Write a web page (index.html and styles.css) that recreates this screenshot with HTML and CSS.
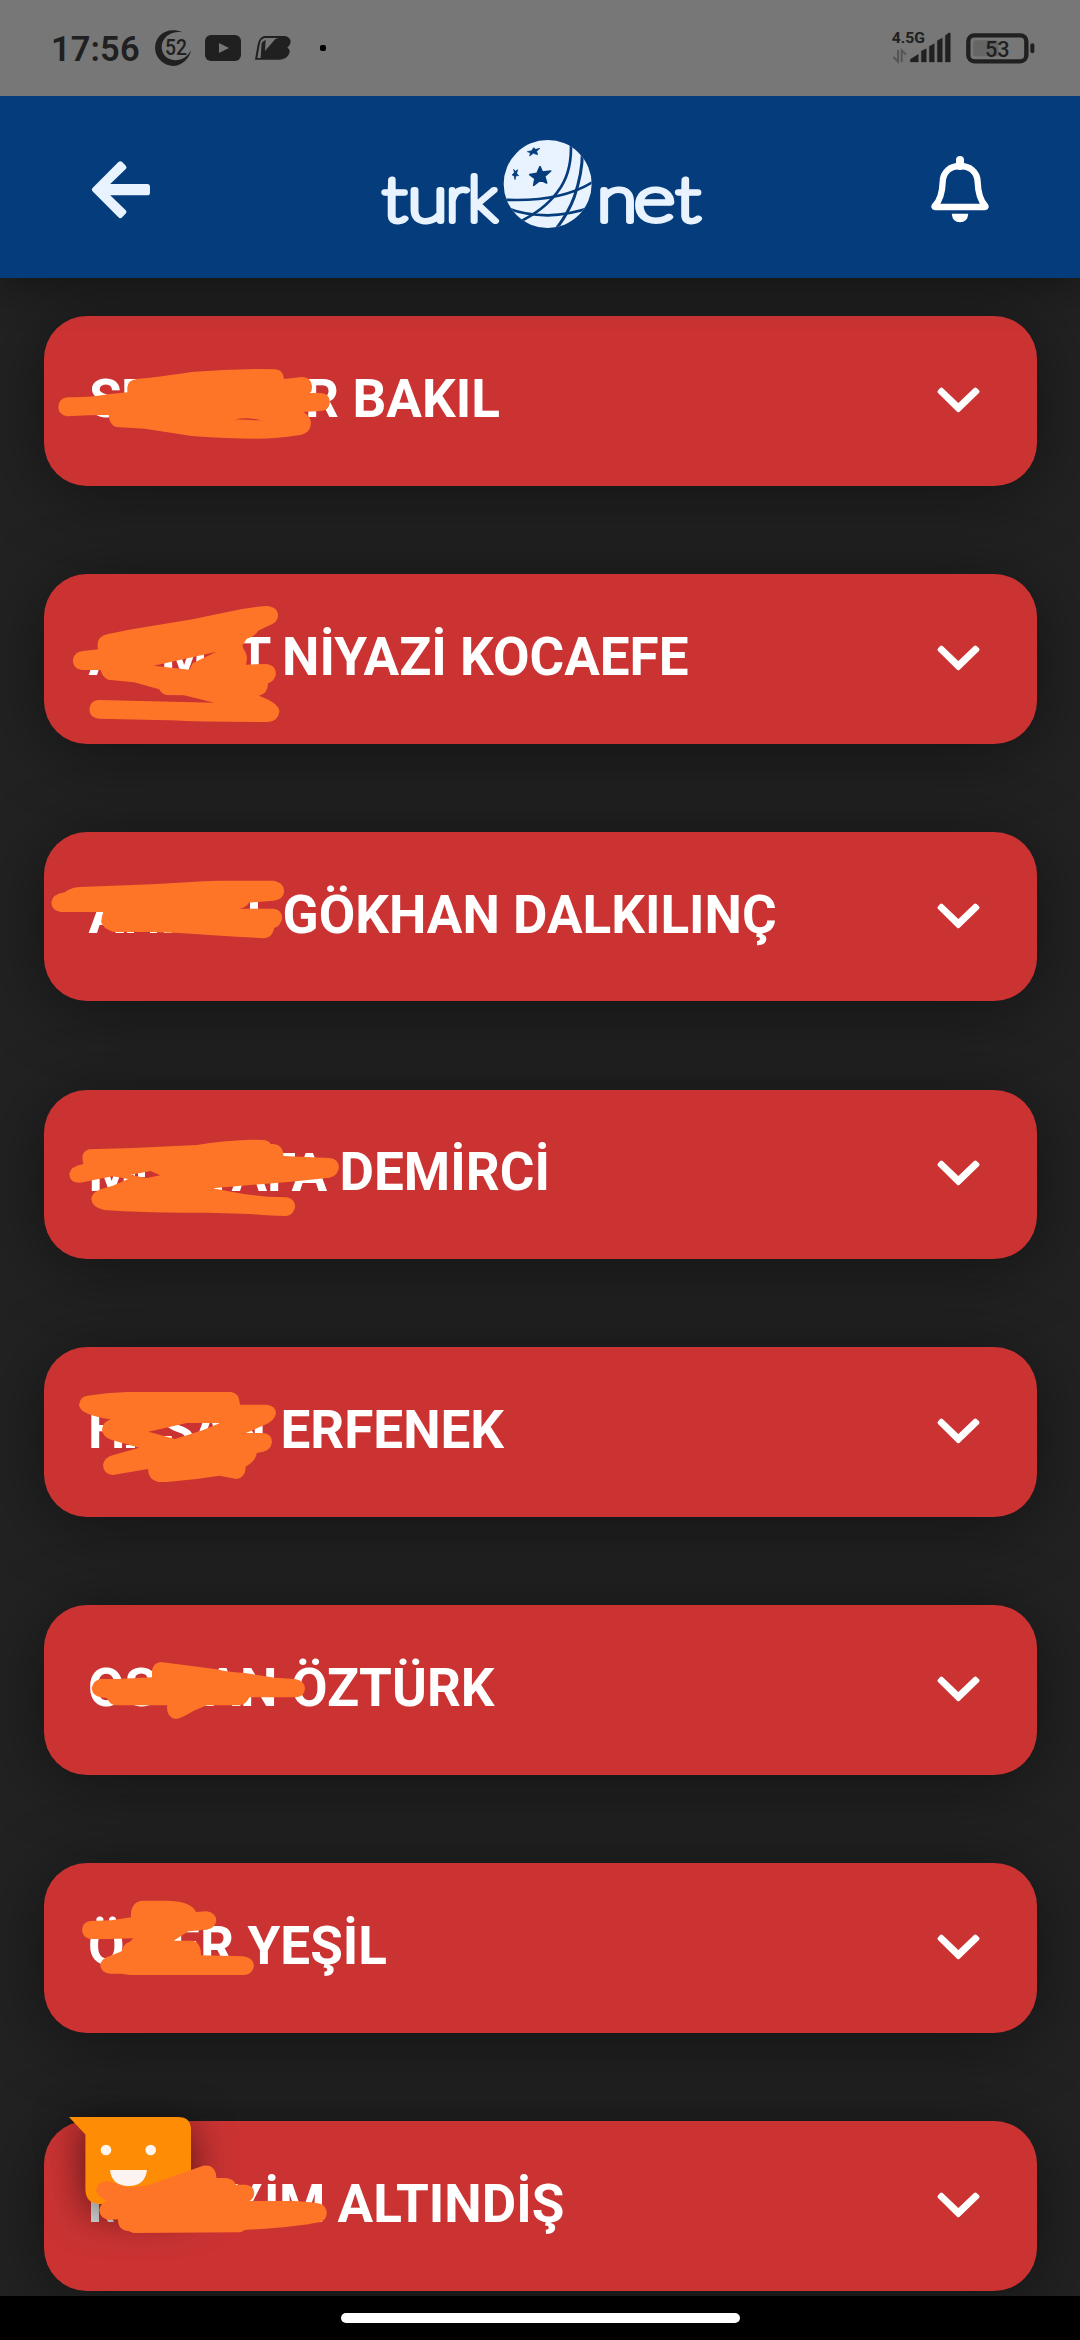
FILE: index.html
```html
<!DOCTYPE html>
<html lang="tr">
<head>
<meta charset="utf-8">
<title>turk.net</title>
<link rel="stylesheet" href="styles.css">
</head>
<body>
<div class="screen">
  <div class="status">
    <span class="clock">17:56</span>
    <svg class="st-52" viewBox="465 90 108 108"><path fill="#202020" fill-rule="evenodd" d="M547 97C500 78 465 108 465 145C467 178 495 198 520 198C550 196 570 172 573 150C562 173 540 183 520 180C495 176 484 158 485 138C488 110 515 92 547 97Z"/><text x="495" y="165" font-size="68" font-weight="500" textLength="66" lengthAdjust="spacingAndGlyphs">52</text></svg>
    <svg class="st-yt" viewBox="0 0 36 26"><rect width="36" height="26" rx="6" fill="#202020"/><path d="M14 8L24 13L14 18Z" fill="#777"/></svg>
    <svg class="st-vb" viewBox="765 108 108 72"><path fill="#202020" fill-rule="evenodd" d="M794 108H855Q872 112 872 126Q870 138 862 143Q874 150 866 164Q858 178 838 179H765L773 133Q778 110 794 108ZM795 114Q781 116 779 134L772 174H782L785 128L797 119L795 153L826 117L836 114Z"/></svg>
    <span class="dot"></span>
    <span class="spacer"></span>
    <svg class="st-signal" viewBox="275 90 180 100"><text x="277" y="129" font-size="46" font-weight="700" textLength="100" lengthAdjust="spacingAndGlyphs">4.5G</text><path d="M296 150V185L282 171M307 186V151L320 164" fill="none" stroke="#555" stroke-width="6"/><path fill="#202020" d="M333 186V178L357 163V186ZM366 186V153L381 146V186ZM390 186V139L405 131V186ZM414 186V122L429 114V186ZM438 186V107L448 99H453V186Z" stroke="#202020" stroke-width="1" stroke-linejoin="round"/></svg>
    <svg class="st-batt" viewBox="500 98 206 92"><rect x="507" y="105" width="174" height="78" rx="18" fill="none" stroke="#202020" stroke-width="13"/><rect x="522" y="120" width="76" height="48" rx="8" fill="#666"/><rect x="693" y="129" width="12" height="30" rx="6" fill="#202020"/><text x="557" y="170" font-size="68" font-weight="500" textLength="74" lengthAdjust="spacingAndGlyphs">53</text></svg>
  </div>

  <header class="bar">
    <svg class="back" viewBox="276 484 175 172"><path d="M284 570L361 493L371 503L311 561H442V579H311L371 637L361 647Z" fill="#e8f3ff" stroke="#e8f3ff" stroke-width="16" stroke-linejoin="round"/></svg>
    <svg class="logo" viewBox="0 0 324 92">
      <g class="word">
        <text transform="translate(14.500 82.500) scale(1.2 1)">t</text>
        <text transform="translate(47.500 82.500) scale(1.2 1)">u</text>
        <text transform="translate(77 82.500) scale(1.05 1)">r</text>
        <text transform="translate(102.500 82.500) scale(1.07 1)">k</text>
        <text transform="translate(237 82.500) scale(1.2 1)">n</text>
        <text transform="translate(274.500 82.500) scale(1.3 1)">e</text>
        <text transform="translate(308 82.500) scale(1.2 1)">t</text>
      </g>
      <g transform="translate(-19 -38) scale(.33333)">
        <clipPath id="globe"><circle cx="560" cy="252" r="132"/></clipPath>
        <circle cx="560" cy="252" r="132" fill="#e8f3ff"/>
        <g clip-path="url(#globe)" fill="none" stroke="#043c7c" stroke-width="8">
          <path d="M629 120Q636 215 590 275Q550 330 470 368"/>
          <path d="M664 160Q664 220 640 290Q622 340 580 394" stroke-width="9"/>
          <path d="M425 299Q600 308 700 243"/>
          <path d="M425 318Q480 345 560 346Q625 345 690 322"/>
        </g>
        <g fill="#043c7c" stroke="#043c7c" stroke-width="5" stroke-linejoin="round">
          <path d="M537 200L544 216L569 213L551 229L557 249L538 240L518 256L522 236L506 224L528 220Z"/>
          <path d="M518 143L524 148L537 145L527 154L530 164L517 160L506 168L508 158L499 155L512 152Z" stroke-width="2"/>
          <path d="M458 208L463 214L470 209L467 220L473 227L465 227L462 239L459 227L453 225L460 218Z" stroke-width="2"/>
        </g>
      </g>
    </svg>
    <svg class="bell" viewBox="393 470 174 199"><path d="M480 482V500" stroke="#fff" stroke-width="24" stroke-linecap="round"/><path d="M404 620C422 602 427 580 428 548C429 515 453 500 480 500C507 500 532 515 533 548C534 580 540 602 556 620Q558 623 555 623H405Q402 623 404 620Z" fill="none" stroke="#fff" stroke-width="19" stroke-linejoin="round"/><path d="M455 643H505Q502 669 480 669Q458 669 455 643Z" fill="#fff"/></svg>
  </header>

  <main class="list">
    <div class="card"><svg class="given"><text y="101"><tspan x="45">S</tspan><tspan x="77">E</tspan><tspan x="261">R</tspan></text></svg><span class="name n1">BAKIL</span><svg class="chev" viewBox="261 261 129 78"><path d="M274 268L325 317L376 268L383 275L325 331L268 275Z"/></svg></div>
    <div class="card"><svg class="given"><text y="101"><tspan x="44.5">A</tspan><tspan x="117">M</tspan><tspan x="194.5">T</tspan></text></svg><span class="name n2">NİYAZİ KOCAEFE</span><svg class="chev" viewBox="261 261 129 78"><path d="M274 268L325 317L376 268L383 275L325 331L268 275Z"/></svg></div>
    <div class="card"><svg class="given"><text y="101"><tspan x="44.5">A</tspan></text><path d="M83 98H90V101H83ZM106 98H113V101H106ZM120 98H128V101H120ZM206 68H214V80H206Z"/></svg><span class="name n3">GÖKHAN DALKILINÇ</span><svg class="chev" viewBox="261 261 129 78"><path d="M274 268L325 317L376 268L383 275L325 331L268 275Z"/></svg></div>
    <div class="card"><svg class="given"><text y="101"><tspan x="44.5">M</tspan><tspan x="187.500">AFA</tspan></text><path d="M170 94H178V101H170ZM86 84L91 86V82ZM94 80H101V87H94Z"/></svg><span class="name n4">DEMİRCİ</span><svg class="chev" viewBox="261 261 129 78"><path d="M274 268L325 317L376 268L383 275L325 331L268 275Z"/></svg></div>
    <div class="card"><svg class="given"><text y="101"><tspan x="44">H</tspan><tspan x="118">S</tspan><tspan x="149">A</tspan><tspan x="184.500">N</tspan></text><path d="M82 98H91V101H82Z"/></svg><span class="name n5">ERFENEK</span><svg class="chev" viewBox="261 261 129 78"><path d="M274 268L325 317L376 268L383 275L325 331L268 275Z"/></svg></div>
    <div class="card"><svg class="given"><text y="101"><tspan x="44">O</tspan><tspan x="80.500">S</tspan><tspan x="161">A</tspan><tspan x="196">N</tspan></text></svg><span class="name n6">ÖZTÜRK</span><svg class="chev" viewBox="261 261 129 78"><path d="M274 268L325 317L376 268L383 275L325 331L268 275Z"/></svg></div>
    <div class="card"><svg class="given"><text y="101"><tspan x="44">Ö</tspan><tspan x="126">E</tspan><tspan x="156">R</tspan></text></svg><span class="name n7">YEŞİL</span><svg class="chev" viewBox="261 261 129 78"><path d="M274 268L325 317L376 268L383 275L325 331L268 275Z"/></svg></div>
    <div class="card"><svg class="given"><text y="101"><tspan x="185">Y</tspan><tspan x="220">İ</tspan><tspan x="235">M</tspan></text><path fill="#ddd" d="M47 64H55V101H47ZM62 96H67L70 101H64Z"/></svg><span class="name n8">ALTINDİŞ</span><svg class="chev" viewBox="261 261 129 78"><path d="M274 268L325 317L376 268L383 275L325 331L268 275Z"/></svg></div>
  </main>

  <nav class="home"><span class="pill"></span></nav>

  <svg class="bot" viewBox="0 0 122 87"><path d="M0 0H109Q122 0 122 13V75Q122 87 110 87H30Q16.400 86 16.400 72V17.500Z" fill="#ff8c05"/><circle cx="37" cy="33" r="5.300" fill="#fff5ee"/><circle cx="81.700" cy="33" r="5.300" fill="#fff5ee"/><path d="M41 53H78Q76 69 59.500 69Q43 69 41 53Z" fill="#fdf4f2"/></svg>

  <svg class="ink" viewBox="0 0 1080 2340">
    <path transform="translate(30 300) scale(.33333)" d="M112 292Q160 292 192 289Q240 281 292 277V262Q294 240 320 237L345 235Q430 225 485 216Q580 208 680 207L735 208Q760 210 762 237L815 231Q843 231 846 258Q847 272 840 279H872Q899 280 900 307Q897 332 872 333L820 336Q843 348 843 371Q840 397 815 404Q740 416 680 416Q600 416 485 408L345 386L260 381Q238 376 236 345Q200 344 175 346L112 349Q86 345 85 321Q86 296 112 292ZM615 358Q650 350 695 361Q650 360 615 358Z"/>
    <path transform="translate(30 560) scale(.43367 .33333)" d="M157 268Q150 230 180 222L235 208L375 178L455 156Q500 142 545 138Q572 140 572 168Q571 188 550 197L526 212Q517 232 500 236L490 256L492 266Q501 280 500 300L498 314Q515 312 545 312Q567 315 567 342Q565 362 549 370Q548 402 528 407Q575 430 575 455Q572 484 548 486Q400 486 320 481L158 476Q137 472 137 448Q138 422 158 420L425 428L355 406L315 405Q303 402 298 388L240 367L180 359Q166 350 163 330H120Q99 326 99 302Q100 276 122 273ZM285 317L400 284L430 275L375 310L368 329Z"/>
    <path transform="translate(30 830) scale(.49745 .33333)" d="M70 187Q80 173 100 171L245 163Q320 155 380 152H490Q511 158 511 183Q510 208 490 212L440 218Q435 232 420 236H490Q507 240 507 266Q503 288 491 294Q487 323 472 325L415 320L300 309L245 306H168Q146 295 143 275L147 246H62Q43 242 43 217Q45 192 70 187Z"/>
    <path transform="translate(30 1080) scale(.34439 .33333)" d="M155 252Q145 215 172 208L300 204L485 195Q560 182 640 179L680 180Q695 183 699 192Q735 190 736 228L870 234Q897 238 897 263Q893 288 870 293L750 306L640 315L530 325L620 342L690 350L745 352Q770 358 770 380Q765 405 745 408Q700 407 640 402L515 398Q350 400 215 390Q180 382 178 357Q180 335 210 326L240 317L285 297L240 289L145 308Q115 308 114 282Q118 258 155 252ZM290 285L350 273L378 286L340 294Z"/>
    <path transform="translate(30 1340) scale(.33333)" d="M172 167Q230 158 290 156H602Q628 158 630 194H710Q738 198 738 220Q735 240 710 252L648 279H690Q726 278 726 306Q723 330 700 335L680 339Q680 360 647 380Q647 412 620 417L568 407Q490 420 410 426H385Q355 420 354 387L248 405Q220 402 219 376Q222 352 250 345L328 323L245 300Q218 292 216 268Q220 245 242 238Q150 225 147 195Q150 170 172 167ZM355 275L470 249H570L520 270L435 297Z"/>
    <path transform="translate(30 1600) scale(.33333)" d="M213 237Q270 238 305 235L366 232V210Q372 188 392 186L560 208Q600 218 645 219L735 233L795 237Q824 242 825 265Q824 290 798 292H658Q650 312 630 316H530L490 333Q450 357 437 357Q410 352 411 320L413 316H255Q236 310 231 294L213 292Q187 288 185 264Q190 240 213 237Z"/>
    <path transform="translate(30 1850) scale(.33333)" d="M180 213L245 211L303 202Q300 158 335 152H415Q485 155 498 186L530 184Q557 188 559 211Q556 235 530 239L475 244L431 272H490Q514 278 513 316L640 319Q671 325 672 347Q668 372 645 375H300L275 371H240Q212 368 211 345Q213 325 240 318L275 304Q280 280 300 275L310 265L240 267H180Q157 262 156 239Q158 217 180 213Z"/>
    <path transform="translate(30 2090) scale(.35714 .33333)" d="M215 273Q245 280 275 293L330 286L485 227Q520 222 522 264H550Q572 268 576 284H605Q628 288 628 310Q627 325 615 333L740 333Q815 338 820 345Q831 355 831 370Q829 393 810 397Q740 412 600 420Q594 427 585 427L290 429L275 423Q247 422 246 388L222 390Q195 385 194 360Q197 338 218 332Q187 322 185 300Q190 275 215 273Z"/>
  </svg>
</div>
</body>
</html>
```
FILE: styles.css
```css
* { box-sizing: border-box; }
body { margin: 0; background: #222; font-family: Roboto, sans-serif; }
svg { display: block; flex: none; overflow: visible; }
.screen {
  position: relative;
  width: 1080px;
  height: 2340px;
  overflow: hidden;
  display: flex;
  flex-direction: column;
}
.status {
  position: relative;
  z-index: 2;
  height: 96px;
  flex: none;
  background: #777;
  display: flex;
  align-items: center;
  padding: 0 45px 0 51px;
  color: #202020;
}
.status text { fill: #202020; font-family: Roboto, sans-serif; }
.clock { width: 104px; font-size: 34.5px; font-weight: 600; letter-spacing: 0.100px; white-space: nowrap; padding-top: 2px; }
.st-52 { width: 36px; height: 36px; }
.st-yt { width: 36px; height: 26px; margin-left: 14px; }
.st-vb { width: 36px; height: 24px; margin-left: 14px; }
.dot { width: 6px; height: 6px; border-radius: 2px; background: #000; margin-left: 29px; }
.spacer { flex: 1; }
.st-signal { width: 60px; height: 33.300px; margin-top: -3px; }
.st-batt { width: 68.700px; height: 30.700px; margin-left: 15px; }

.bar {
  position: relative;
  z-index: 1;
  height: 182px;
  flex: none;
  background: #043c7c;
  box-shadow: 0 4px 40px rgba(0, 0, 0, .45);
  display: flex;
  align-items: center;
  justify-content: space-between;
  padding: 4px 91px 0 92px;
}
.back { width: 58.300px; height: 57.300px; margin-top: 2px; }
.logo { width: 324px; height: 92px; margin-left: 3px; margin-top: -10px; }
.word { fill: #e8f3ff; stroke: #e8f3ff; stroke-width: 5.800px; stroke-linejoin: round; text-anchor: middle; font-family: Lato, sans-serif; font-weight: 100; font-size: 61px; }
.bell { width: 58px; height: 66.300px; }

.list {
  flex: 1;
  min-height: 0;
  overflow: hidden;
  display: flex;
  flex-direction: column;
  gap: 88.060px;
  padding: 38px 43px 0 44px;
}
.card {
  position: relative;
  flex: none;
  height: 169.800px;
  border-radius: 43px;
  background: #cb3333;
  box-shadow: 0 8px 70px rgba(0, 0, 0, .45);
  display: flex;
  align-items: center;
  justify-content: space-between;
  padding: 0 57px 0 0;
}
.given { position: absolute; inset: 0; width: 100%; height: 100%; fill: #fff; font-size: 53px; font-weight: 700; }
.name { color: #fff; font-size: 53px; line-height: 64px; font-weight: 700; white-space: nowrap; padding-bottom: 4px; }
.n1 { margin-left: 308.500px; }
.n2 { margin-left: 238px; }
.n3 { margin-left: 238.600px; }
.n4 { margin-left: 295.600px; }
.n5 { margin-left: 236.500px; }
.n6 { margin-left: 247px; }
.n7 { margin-left: 203.500px; }
.n8 { margin-left: 293.600px; }
.chev { width: 43px; height: 26px; margin-bottom: 2px; }
.chev path { fill: #fff; stroke: #fff; stroke-width: 11px; stroke-linejoin: round; }

.home { position: relative; z-index: 1; height: 44px; flex: none; background: #000; display: flex; justify-content: center; padding-top: 17px; }
.pill { width: 399px; height: 10px; border-radius: 5px; background: #fff; }

.bot { position: absolute; left: 69px; top: 2117px; width: 122px; height: 87px; overflow: visible; filter: drop-shadow(0 8px 20px rgba(0, 0, 0, .6)); }
.ink { position: absolute; z-index: 2; inset: 0; width: 1080px; height: 2340px; fill: #ff7527; fill-rule: evenodd; pointer-events: none; }
```
